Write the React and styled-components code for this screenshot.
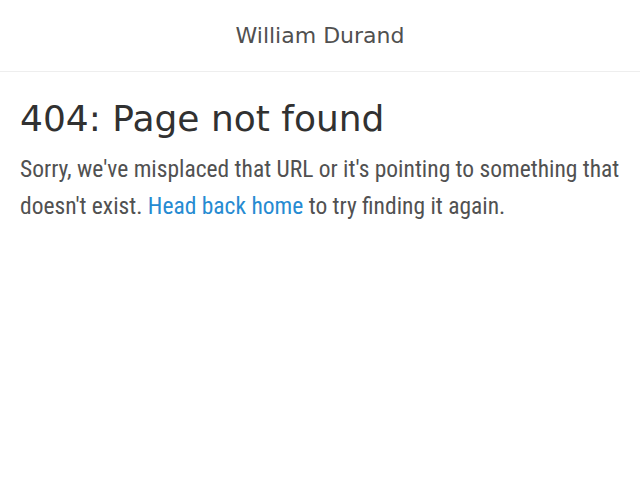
import React from 'react';
import styled, { createGlobalStyle } from 'styled-components';

const GlobalStyle = createGlobalStyle`
  html, body {
    margin: 0;
    padding: 0;
    background: #fff;
  }
`;

const Masthead = styled.header`
  height: 71px;
  border-bottom: 1px solid #eee;
  display: flex;
  justify-content: center;
  align-items: center;
`;

const SiteTitle = styled.a`
  font-family: "DejaVu Sans", sans-serif;
  font-size: 22px;
  color: #505050;
  text-decoration: none;
`;

const Content = styled.main`
  padding: 24px 20px 0;
`;

const Title = styled.h1`
  margin: 0 0 10px;
  font-family: "DejaVu Sans", sans-serif;
  font-weight: normal;
  font-size: 36px;
  line-height: 1.25;
  color: #313131;
`;

const Lead = styled.p`
  margin: 0;
  font-family: Roboto, "Liberation Sans", sans-serif;
  font-stretch: condensed;
  font-size: 23.5px;
  line-height: 37px;
  color: #515151;
`;

const Link = styled.a`
  color: #268bd2;
  text-decoration: none;
`;

const App = () => (
  <>
    <GlobalStyle />
    <Masthead>
      <SiteTitle href="#">William Durand</SiteTitle>
    </Masthead>
    <Content>
      <Title>404: Page not found</Title>
      <Lead>
        Sorry, we've misplaced that URL or it's pointing to something that
        doesn't exist. <Link href="#">Head back home</Link> to try finding it
        again.
      </Lead>
    </Content>
  </>
);

export default App;
